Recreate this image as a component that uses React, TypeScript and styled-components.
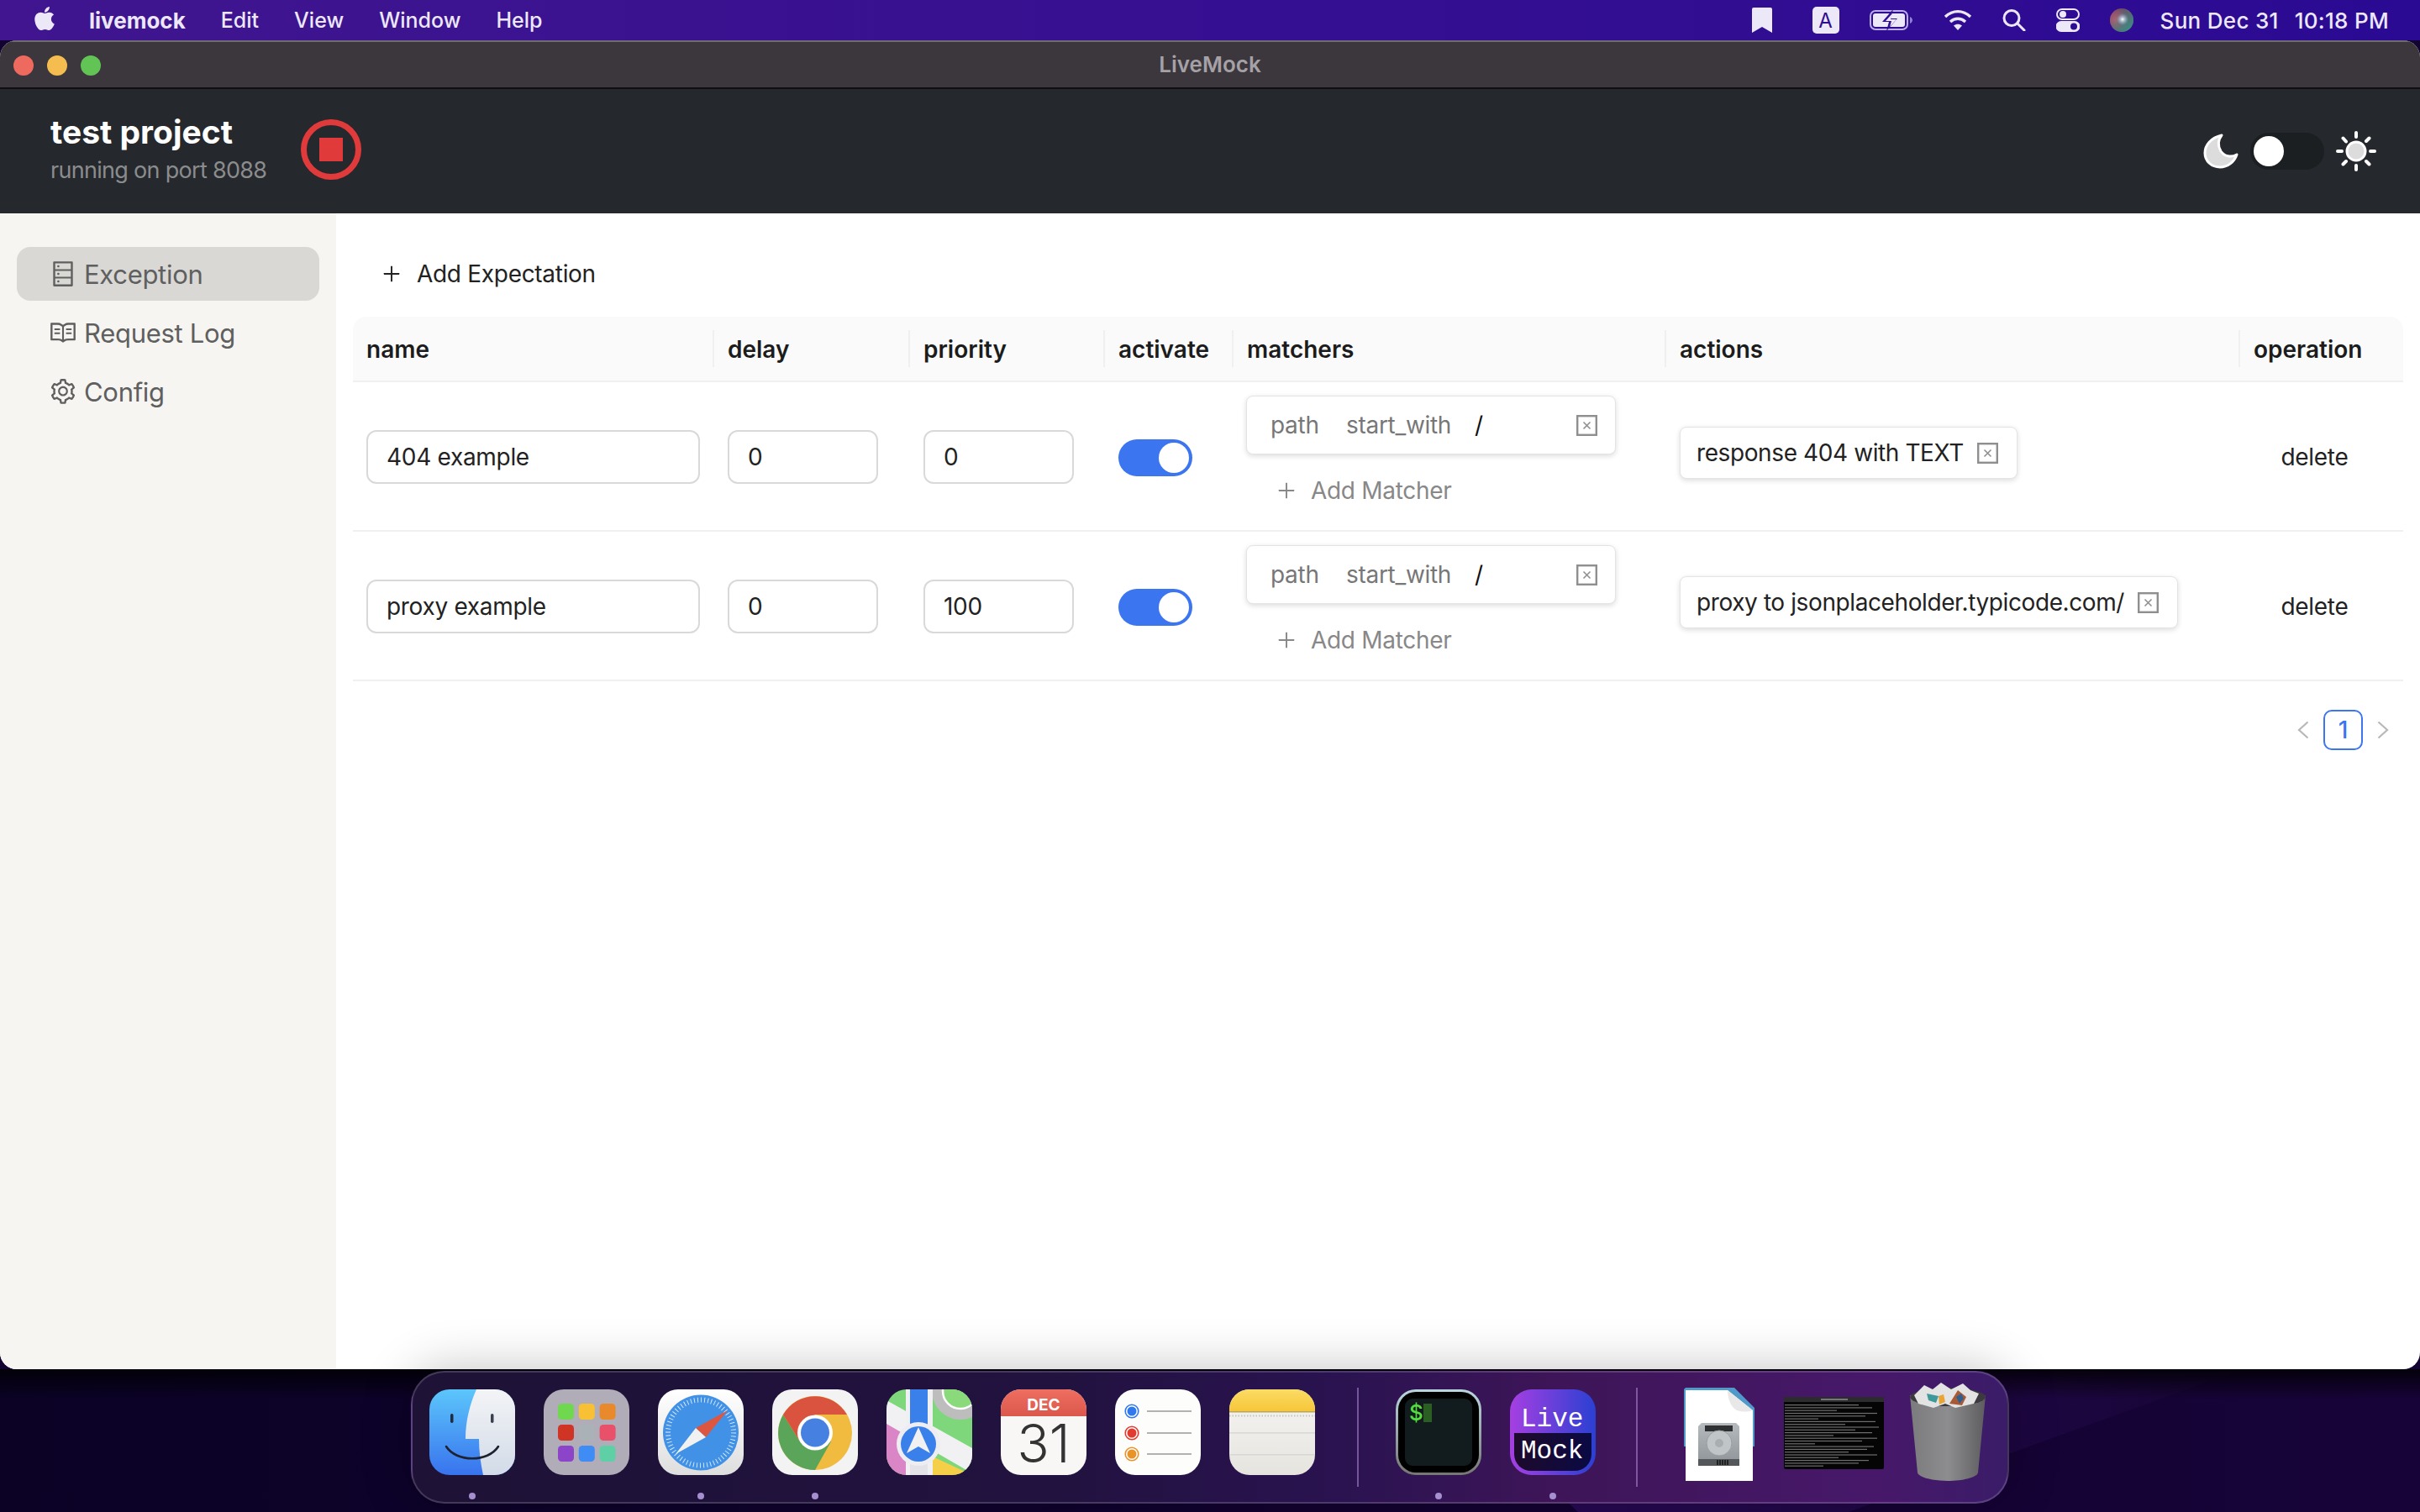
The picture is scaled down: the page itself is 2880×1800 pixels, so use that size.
import React, { FC } from 'react'
import styled, { createGlobalStyle } from 'styled-components'
import { AiOutlineDatabase, AiOutlinePlus, AiOutlineRead, AiOutlineSetting } from 'react-icons/ai'
import { FaApple } from 'react-icons/fa'

const UI_FONT = `Inter, "Noto Sans", "Liberation Sans", sans-serif`

const GlobalStyle = createGlobalStyle`
    html, body {
        margin: 0;
        padding: 0;
        background: #120330;
        font-family: ${UI_FONT};
    }
    * {
        box-sizing: border-box;
    }
`

const expectations = [
    { name: '404 example', delay: '0', priority: '0', action: 'response 404 with TEXT' },
    { name: 'proxy example', delay: '0', priority: '100', action: 'proxy to jsonplaceholder.typicode.com/' }
]

const logLines = [88, 104, 62, 110, 96, 40, 108, 72, 112, 84, 104, 58, 110, 92, 36, 106, 98, 76, 110, 64, 100, 88, 46]

/* ---------- menu bar icons ---------- */

const BookmarkIcon = () => (
    <svg width="24" height="30" viewBox="0 0 24 30"><path d="M2 0h20a2 2 0 0 1 2 2v28l-12-7-12 7V2a2 2 0 0 1 2-2z" fill="#ece8f8" /></svg>
)

const BatteryIcon = () => (
    <svg width="52" height="26" viewBox="0 0 52 26">
        <rect x="1" y="2" width="44" height="22" rx="6" fill="none" stroke="#b9aee6" strokeWidth="2" />
        <rect x="4" y="5" width="38" height="16" rx="3" fill="#ece8f8" />
        <path d="M48 9c2 1 3 2.500 3 4s-1 3-3 4z" fill="#8f83cf" />
        <path d="M28 0L15 15h8l-3 11 13-15h-8z" fill="#2f0c92" />
        <path d="M27 5l-8 9h7l-2 7 8-9h-7z" fill="#ece8f8" />
    </svg>
)

const WifiIcon = () => (
    <svg width="34" height="26" viewBox="0 0 34 26" fill="none" stroke="#ece8f8" strokeWidth="3.400">
        <path d="M2 9c9-8.500 21-8.500 30 0" />
        <path d="M8 15c5.500-5 12.500-5 18 0" />
        <path d="M17 25l-5-5.500c3-2.500 7-2.500 10 0z" fill="#ece8f8" stroke="none" />
    </svg>
)

const SearchIcon = () => (
    <svg width="28" height="26" viewBox="0 0 28 26" fill="none" stroke="#ece8f8" strokeWidth="3">
        <circle cx="11" cy="10.500" r="9" />
        <path d="M18 17l8 8" strokeLinecap="round" />
    </svg>
)

const ControlIcon = () => (
    <svg width="28" height="28" viewBox="0 0 28 28">
        <rect x="1" y="1" width="26" height="12" rx="6" fill="none" stroke="#ece8f8" strokeWidth="2" />
        <circle cx="8" cy="7" r="4" fill="#ece8f8" />
        <path d="M6 15h16a6 6 0 0 1 0 13H6a6 6 0 0 1 0-13z" fill="#ece8f8" />
        <circle cx="21" cy="21.500" r="4" fill="#2f0c92" />
    </svg>
)

const SiriIcon = () => (
    <svg width="28" height="28" viewBox="0 0 28 28">
        <defs>
            <radialGradient id="siriA" cx="25%" cy="50%" r="55%"><stop offset="0" stopColor="#e0506e" /><stop offset="1" stopColor="#7b3a62" /></radialGradient>
            <radialGradient id="siriB" cx="50%" cy="50%" r="30%"><stop offset="0" stopColor="#ffffff" /><stop offset="1" stopColor="#7ec0e8" stopOpacity="0" /></radialGradient>
            <linearGradient id="siriC" x1="0" y1="0" x2="1" y2="1"><stop offset="0" stopColor="#3a8a7a" stopOpacity="0" /><stop offset="1" stopColor="#2f9c8a" /></linearGradient>
        </defs>
        <circle cx="14" cy="14" r="14" fill="url(#siriA)" />
        <circle cx="14" cy="14" r="14" fill="url(#siriC)" />
        <circle cx="15" cy="13" r="12" fill="url(#siriB)" />
    </svg>
)

/* ---------- header icons ---------- */

const StopIcon = () => (
    <svg width="72" height="72" viewBox="0 0 72 72">
        <circle cx="36" cy="36" r="32.500" fill="none" stroke="#e13a3a" strokeWidth="7" />
        <rect x="22" y="22" width="28" height="28" fill="#e13a3a" />
    </svg>
)

const MoonIcon = () => (
    <svg width="42" height="42" viewBox="0 0 42 42">
        <path d="M22 2C9 5 2 14 2 23c0 10 8 17 18 17 9 0 17-6 20-15-7 4-15 2-19-4-4-7-3-14 1-19z" fill="#dcdcdc" stroke="#fff" strokeWidth="3" strokeLinejoin="round" />
    </svg>
)

const SunIcon = () => (
    <svg width="48" height="48" viewBox="0 0 48 48">
        <circle cx="24" cy="24" r="11" fill="#dcdcdc" stroke="#fff" strokeWidth="3" />
        <g stroke="#fff" strokeWidth="4" strokeLinecap="round">
            <path d="M24 2v5M24 41v5M2 24h5M41 24h5M8.500 8.500l3.500 4M36 36l3.500 3.500M8.500 39.500l3.500-3.500M36 12l3.500-3.500" />
        </g>
    </svg>
)

const RemoveIcon = () => (
    <svg width="25" height="25" viewBox="0 0 25 25" fill="none" stroke="#8f8f8f">
        <rect x="1.200" y="1.200" width="22.600" height="22.600" strokeWidth="2.400" />
        <path d="M8.500 8.500l8 8M16.500 8.500l-8 8" strokeWidth="1.600" />
    </svg>
)

const Chevron: FC<{ flip?: boolean }> = ({ flip }) => (
    <svg width="14" height="22" viewBox="0 0 14 22" fill="none" stroke="#b8b8b8" strokeWidth="2.200" style={flip ? { transform: 'scaleX(-1)' } : undefined}>
        <path d="M12.500 1.500L2 11l10.500 9.500" />
    </svg>
)

/* ---------- dock icons ---------- */

const FinderIcon = () => (
    <svg width="102" height="102" viewBox="0 0 102 102">
        <defs>
            <linearGradient id="finderL" x1="0" y1="0" x2="0" y2="1"><stop offset="0" stopColor="#5cc6fb" /><stop offset="1" stopColor="#3873ee" /></linearGradient>
            <linearGradient id="finderR" x1="0" y1="0" x2="0" y2="1"><stop offset="0" stopColor="#f3f4f6" /><stop offset="1" stopColor="#d2dbe8" /></linearGradient>
            <clipPath id="finderClip"><rect width="102" height="102" rx="24" /></clipPath>
        </defs>
        <g clipPath="url(#finderClip)">
            <rect width="102" height="102" fill="url(#finderL)" />
            <path d="M56 0h46v102H64c-3-14-5-28-5-43H43c0-21 5-41 13-59z" fill="url(#finderR)" />
        </g>
        <rect x="25" y="29" width="3.500" height="11" rx="1.700" fill="#1d2b44" />
        <rect x="73" y="29" width="3.500" height="11" rx="1.700" fill="#39414f" />
        <path d="M20 68c12 19 50 19 62 0" fill="none" stroke="#1e2230" strokeWidth="2.600" strokeLinecap="round" />
    </svg>
)

const launchpadTiles = [
    ['#6fd84e', '#f7c035', '#e88a2c'],
    ['#cf3424', '#aab2b8', '#e9506a'],
    ['#8c45c8', '#3f8cf5', '#5fcfa5']
]

const LaunchpadIcon = () => (
    <svg width="102" height="102" viewBox="0 0 102 102">
        <rect width="102" height="102" rx="24" fill="#b1adb8" />
        {launchpadTiles.map((row, r) => row.map((color, c) => (
            <rect key={`${r}-${c}`} x={17 + c * 24.800} y={17 + r * 25} width="19" height="19" rx="4.500" fill={color} />
        )))}
    </svg>
)

const SafariIcon = () => (
    <svg width="102" height="102" viewBox="0 0 102 102">
        <defs>
            <linearGradient id="safariBg" x1="0" y1="0" x2="0" y2="1"><stop offset="0" stopColor="#fff" /><stop offset="1" stopColor="#dedede" /></linearGradient>
        </defs>
        <rect width="102" height="102" rx="24" fill="url(#safariBg)" />
        <circle cx="51" cy="51.500" r="45" fill="#4192e6" />
        <circle cx="51" cy="51.500" r="39" fill="none" stroke="#fff" strokeOpacity="0.850" strokeWidth="6" strokeDasharray="0.900 3.180" />
        <polygon points="83,25 45,46 57,57" fill="#dc5640" />
        <polygon points="21,77 45,46 57,57" fill="#f1f1f1" />
    </svg>
)

const ChromeIcon = () => (
    <svg width="102" height="102" viewBox="0 0 102 102">
        <rect width="102" height="102" rx="24" fill="#f3f3f3" />
        <circle cx="51" cy="52" r="44" fill="#f0bb3e" />
        <path d="M13 30A44 44 0 0 0 51 96L70 62H33z" fill="#5aa55a" />
        <path d="M89 30A44 44 0 0 0 13 30L33 62 51 30z" fill="#d9533f" />
        <circle cx="51" cy="51.500" r="21" fill="#fff" />
        <circle cx="51" cy="51.500" r="17" fill="#4680e0" />
    </svg>
)

const MapsIcon = () => (
    <svg width="102" height="102" viewBox="0 0 102 102">
        <defs><clipPath id="mapsClip"><rect width="102" height="102" rx="24" /></clipPath></defs>
        <g clipPath="url(#mapsClip)">
            <rect width="102" height="102" fill="#7ed77b" />
            <circle cx="88" cy="2" r="34" fill="#bdbdbd" />
            <circle cx="88" cy="2" r="21" fill="#8ada7c" stroke="#fff" strokeWidth="2.500" />
            <path d="M0 41l23 0V102H0z" fill="#d985c6" />
            <path d="M55 80l47 22H55z" fill="#f6cf48" />
            <path d="M0 13l102 57v30L0 41z" fill="#f1f1f3" />
            <rect x="23" width="32" height="102" fill="#f0f0f2" />
            <rect x="28" width="21" height="102" fill="#3a80ea" />
            <rect x="28" y="60" width="21" height="42" fill="#e4e4e8" />
        </g>
        <circle cx="38" cy="65" r="26" fill="#eeeef2" />
        <circle cx="38" cy="65" r="21" fill="#3a80ea" />
        <path d="M38 45l14 31-14-8-14 8z" fill="#f1f1f1" />
    </svg>
)

const CalendarIcon = () => (
    <svg width="102" height="102" viewBox="0 0 102 102">
        <defs>
            <clipPath id="calClip"><rect width="102" height="102" rx="24" /></clipPath>
            <linearGradient id="calTop" x1="0" y1="0" x2="0" y2="1"><stop offset="0" stopColor="#ee6e60" /><stop offset="1" stopColor="#db574c" /></linearGradient>
        </defs>
        <g clipPath="url(#calClip)">
            <rect width="102" height="102" fill="#f8f7f6" />
            <rect width="102" height="32" fill="url(#calTop)" />
        </g>
        <text x="51" y="25" textAnchor="middle" fontFamily={UI_FONT} fontSize="19" fontWeight="700" fill="#fff">DEC</text>
        <text x="51" y="87" textAnchor="middle" fontFamily={UI_FONT} fontSize="63" fontWeight="300" fill="#333">31</text>
    </svg>
)

const reminderDots = [
    { y: 26, color: '#2f78ee' },
    { y: 52, color: '#e23b30' },
    { y: 77, color: '#e8932a' }
]

const RemindersIcon = () => (
    <svg width="102" height="102" viewBox="0 0 102 102">
        <rect width="102" height="102" rx="24" fill="#fdfdfc" />
        {reminderDots.map(dot => (
            <g key={dot.y}>
                <circle cx="20" cy={dot.y} r="7.800" fill="#fff" stroke={dot.color} strokeWidth="1.600" />
                <circle cx="20" cy={dot.y} r="5.500" fill={dot.color} />
                <rect x="38" y={dot.y - 1} width="53" height="2" fill="#b2b2b2" />
            </g>
        ))}
    </svg>
)

const NotesIcon = () => (
    <svg width="102" height="102" viewBox="0 0 102 102">
        <defs>
            <clipPath id="notesClip"><rect width="102" height="102" rx="24" /></clipPath>
            <linearGradient id="notesTop" x1="0" y1="0" x2="0" y2="1"><stop offset="0" stopColor="#fbdc64" /><stop offset="1" stopColor="#f6c63a" /></linearGradient>
            <linearGradient id="notesBody" x1="0" y1="0" x2="0" y2="1"><stop offset="0" stopColor="#f6f5f2" /><stop offset="1" stopColor="#e5e4df" /></linearGradient>
        </defs>
        <g clipPath="url(#notesClip)">
            <rect width="102" height="102" fill="url(#notesBody)" />
            <rect width="102" height="26" fill="url(#notesTop)" />
            <rect y="26" width="102" height="1.500" fill="#b9a65a" />
            <path d="M0 31.500h102" stroke="#c4c4c0" strokeWidth="2" strokeDasharray="1.500 2" />
            <rect y="51" width="102" height="1.600" fill="#d8d8d4" />
            <rect y="77" width="102" height="1.600" fill="#d8d8d4" />
        </g>
    </svg>
)

const TerminalIcon = () => (
    <svg width="102" height="102" viewBox="0 0 102 102">
        <defs>
            <linearGradient id="termEdge" x1="0" y1="0" x2="0" y2="1"><stop offset="0" stopColor="#b9d6de" /><stop offset="1" stopColor="#767672" /></linearGradient>
        </defs>
        <rect width="102" height="102" rx="24" fill="url(#termEdge)" />
        <rect x="3" y="3" width="96" height="96" rx="21" fill="#000" />
        <rect x="11" y="11" width="80" height="80" rx="9" fill="#121b1d" />
        <text x="16" y="37" fontFamily={UI_FONT} fontSize="26" fontWeight="500" fill="#55dd40">$</text>
        <rect x="33" y="17" width="10" height="22" fill="#2a5e22" />
    </svg>
)

const LiveMockIcon = () => (
    <svg width="102" height="102" viewBox="0 0 102 102">
        <defs>
            <linearGradient id="lmBg" x1="0" y1="0" x2="1" y2="0"><stop offset="0" stopColor="#a63fe2" /><stop offset="1" stopColor="#2a40d2" /></linearGradient>
            <linearGradient id="lmDark" x1="0" y1="0" x2="1" y2="0"><stop offset="0" stopColor="#1e0a2c" /><stop offset="1" stopColor="#0a0a44" /></linearGradient>
        </defs>
        <rect width="102" height="102" rx="26" fill="url(#lmBg)" />
        <path d="M5 52h92v25a20 20 0 0 1-20 20H25A20 20 0 0 1 5 77z" fill="url(#lmDark)" />
        <text x="13" y="44" fontFamily="'Liberation Mono', monospace" fontSize="31" fill="#fff">Live</text>
        <text x="13" y="82" fontFamily="'Liberation Mono', monospace" fontSize="31" fill="#fff">Mock</text>
    </svg>
)

const DiskFileIcon = () => (
    <svg width="84" height="111" viewBox="0 0 84 111">
        <defs>
            <linearGradient id="diskBody" x1="0" y1="0" x2="0" y2="1"><stop offset="0" stopColor="#b4babd" /><stop offset="1" stopColor="#8d9396" /></linearGradient>
        </defs>
        <path d="M2 0h58l24 24v46H0V2z" fill="#4f9ac8" />
        <path d="M2 3h50l30 24v84H2z" fill="#fff" />
        <path d="M52 3c0 12 5 21 11 24 6 2 12 2 19 0z" fill="#e8e8e8" />
        <path d="M17 46l4-4h41l4 4v47H17z" fill="url(#diskBody)" />
        <rect x="25" y="45" width="33" height="7" fill="#2e3032" />
        <circle cx="42" cy="66" r="15" fill="#c0c5c8" stroke="#9a9fa2" />
        <circle cx="42" cy="66" r="5" fill="#a9aeb1" />
        <rect x="17" y="85" width="49" height="8" fill="#55585a" />
        <path d="M40 86v6M43 86v6M46 86v6M49 86v6M52 86v6" stroke="#111" strokeWidth="1.500" />
    </svg>
)

const LogWindowIcon = () => (
    <svg width="119" height="86" viewBox="0 0 119 86">
        <rect width="119" height="86" rx="2" fill="#050505" />
        <rect width="119" height="6" fill="#2c2c2e" />
        <rect x="44" y="2" width="32" height="2" fill="#777" />
        {logLines.map((width, i) => (
            <rect key={i} x="1" y={9 + i * 3.300} width={width} height="1.200" fill="#6e6e6e" />
        ))}
    </svg>
)

const TrashIcon = () => (
    <svg width="92" height="118" viewBox="0 0 92 118">
        <defs>
            <linearGradient id="binBody" x1="0" y1="0" x2="1" y2="0"><stop offset="0" stopColor="#7b7b7d" /><stop offset="0.500" stopColor="#8d8d8f" /><stop offset="1" stopColor="#5d5d5f" /></linearGradient>
        </defs>
        <path d="M1 16h90l-9 92c-1 6-19 10-36 10s-35-4-36-10z" fill="url(#binBody)" />
        <ellipse cx="46" cy="18" rx="45" ry="11" fill="#3c3a3e" />
        <path d="M6 16L18 4l10 5 10-8 12 8 14-7 9 8 10 4-6 12-22 5-12-5-14 5-18-5z" fill="#e3e3e3" />
        <path d="M21 14l14 3-3 8-9-3z" fill="#3e9a9a" />
        <path d="M35 17l6-2 2 9-7 3z" fill="#e8a536" />
        <path d="M48 26l10-16 10 8-5 10z" fill="#a85a38" />
        <path d="M56 18l6-4 3 6-5 6z" fill="#2f5f8f" />
    </svg>
)

/* ---------- page ---------- */

const MatcherCell: FC = () => (
    <Cell $column>
        <MatcherCard>
            <MatcherKey>path</MatcherKey>
            <MatcherOp>start_with</MatcherOp>
            <MatcherValue>/</MatcherValue>
            <RemoveSlot><RemoveIcon /></RemoveSlot>
        </MatcherCard>
        <AddMatcher><AiOutlinePlus size={26} />Add Matcher</AddMatcher>
    </Cell>
)

const App: FC = () => (
    <Desktop>
        <GlobalStyle />
        <MenuBar>
            <MenuLeft>
                <AppleSlot><FaApple size={32} color="#ece8f8" /></AppleSlot>
                <MenuApp>livemock</MenuApp>
                <MenuItem>Edit</MenuItem>
                <MenuItem>View</MenuItem>
                <MenuItem>Window</MenuItem>
                <MenuItem>Help</MenuItem>
            </MenuLeft>
            <MenuRight>
                <BookmarkSlot><BookmarkIcon /></BookmarkSlot>
                <InputBadge>A</InputBadge>
                <BatteryIcon />
                <WifiIcon />
                <SearchIcon />
                <ControlIcon />
                <SiriIcon />
                <Clock><span>Sun Dec 31</span><span>10:18 PM</span></Clock>
            </MenuRight>
        </MenuBar>

        <AppWindow>
            <TitleBar>
                <Lights>
                    <Light $color="#ee6a5f" />
                    <Light $color="#f5bd4f" />
                    <Light $color="#61c454" />
                </Lights>
                LiveMock
            </TitleBar>
            <Header>
                <HeaderLeft>
                    <ProjectInfo>
                        <ProjectName>test project</ProjectName>
                        <ProjectPort>running on port 8088</ProjectPort>
                    </ProjectInfo>
                    <StopIcon />
                </HeaderLeft>
                <ThemeSwitch>
                    <MoonIcon />
                    <ThemeTrack><ThemeKnob /></ThemeTrack>
                    <SunIcon />
                </ThemeSwitch>
            </Header>
            <Body>
                <Sidebar>
                    <NavItem $active><AiOutlineDatabase size={34} />Exception</NavItem>
                    <NavItem><AiOutlineRead size={34} />Request Log</NavItem>
                    <NavItem><AiOutlineSetting size={34} />Config</NavItem>
                </Sidebar>
                <Main>
                    <AddButton><AiOutlinePlus size={26} />Add Expectation</AddButton>
                    <TableHead>
                        <HeadCell>name</HeadCell>
                        <HeadCell>delay</HeadCell>
                        <HeadCell>priority</HeadCell>
                        <HeadCell>activate</HeadCell>
                        <HeadCell>matchers</HeadCell>
                        <HeadCell>actions</HeadCell>
                        <HeadCell $last>operation</HeadCell>
                    </TableHead>
                    {expectations.map(item => (
                        <TableRow key={item.name}>
                            <Cell><TextInput $width={397} readOnly value={item.name} /></Cell>
                            <Cell><TextInput $width={179} readOnly value={item.delay} /></Cell>
                            <Cell><TextInput $width={179} readOnly value={item.priority} /></Cell>
                            <Cell><Switch><SwitchKnob /></Switch></Cell>
                            <MatcherCell />
                            <Cell>
                                <ActionCard>
                                    {item.action}
                                    <RemoveIcon />
                                </ActionCard>
                            </Cell>
                            <DeleteCell>delete</DeleteCell>
                        </TableRow>
                    ))}
                    <Pagination>
                        <Chevron />
                        <PageButton>1</PageButton>
                        <Chevron flip />
                    </Pagination>
                </Main>
            </Body>
        </AppWindow>

        <DockArea>
            <Dock>
                <DockSlot><FinderIcon /><DockDot $on /></DockSlot>
                <DockSlot><LaunchpadIcon /><DockDot /></DockSlot>
                <DockSlot><SafariIcon /><DockDot $on /></DockSlot>
                <DockSlot><ChromeIcon /><DockDot $on /></DockSlot>
                <DockSlot><MapsIcon /><DockDot /></DockSlot>
                <DockSlot><CalendarIcon /><DockDot /></DockSlot>
                <DockSlot><RemindersIcon /><DockDot /></DockSlot>
                <DockSlot><NotesIcon /><DockDot /></DockSlot>
                <DockDivider $before={16} $after={10} />
                <DockSlot><TerminalIcon /><DockDot $on /></DockSlot>
                <DockSlot><LiveMockIcon /><DockDot $on /></DockSlot>
                <DockDivider $before={14} $after={12} />
                <FileSlot $top={-2}><DiskFileIcon /></FileSlot>
                <FileSlot $top={9}><LogWindowIcon /></FileSlot>
                <FileSlot $top={-9}><TrashIcon /></FileSlot>
            </Dock>
        </DockArea>
    </Desktop>
)

export default App

const Desktop = styled.div`
    width: 2880px;
    height: 1800px;
    display: flex;
    flex-direction: column;
    overflow: hidden;
    background: #120330;
`

const MenuBar = styled.div`
    height: 48px;
    flex-shrink: 0;
    display: flex;
    align-items: center;
    justify-content: space-between;
    padding: 0 37px 0 40px;
    background: linear-gradient(90deg, #40158f, #2b0a93);
    color: #ece8f8;
    font-size: 25px;
`

const MenuLeft = styled.div`
    display: flex;
    align-items: center;
    gap: 42px;
`

const AppleSlot = styled.div`
    width: 26px;
    margin-right: -2px;
    display: flex;
    justify-content: center;
    margin-top: -4px;
`

const MenuApp = styled.span`
    font-size: 26px;
    font-weight: 700;
`

const MenuItem = styled.span`
    font-weight: 500;
`

const MenuRight = styled.div`
    display: flex;
    align-items: center;
    gap: 36px;
`

const BookmarkSlot = styled.div`
    display: flex;
    margin-right: 12px;
`

const InputBadge = styled.div`
    width: 32px;
    height: 32px;
    border-radius: 5px;
    background: #ece8f8;
    color: #2f0c92;
    font-size: 24px;
    display: flex;
    align-items: center;
    justify-content: center;
`

const Clock = styled.div`
    display: flex;
    gap: 19px;
    margin-left: -4px;
    font-size: 26px;
    font-weight: 500;
    letter-spacing: 0.3px;
`

const AppWindow = styled.div`
    height: 1582px;
    flex-shrink: 0;
    display: flex;
    flex-direction: column;
    border-radius: 20px;
    overflow: hidden;
    background: #fff;
`

const TitleBar = styled.div`
    position: relative;
    height: 58px;
    flex-shrink: 0;
    display: flex;
    align-items: center;
    justify-content: center;
    background: #3b373d;
    box-shadow: inset 0 2px 0 #6f6b70;
    border-bottom: 2px solid #0e0e10;
    color: #a5a1a6;
    font-size: 26px;
    font-weight: 600;
`

const Lights = styled.div`
    position: absolute;
    left: 16px;
    top: 18px;
    display: flex;
    gap: 16px;
`

const Light = styled.span<{ $color: string }>`
    width: 24px;
    height: 24px;
    border-radius: 50%;
    background: ${props => props.$color};
`

const Header = styled.div`
    height: 148px;
    flex-shrink: 0;
    display: flex;
    align-items: center;
    justify-content: space-between;
    padding: 0 52px 0 60px;
    background: #25282c;
`

const HeaderLeft = styled.div`
    display: flex;
    align-items: center;
    gap: 41px;
    padding-bottom: 4px;
`

const ProjectInfo = styled.div`
    display: flex;
    flex-direction: column;
`

const ProjectName = styled.div`
    color: #fff;
    font-size: 39px;
    font-weight: 700;
    line-height: 50px;
`

const ProjectPort = styled.div`
    color: #8b8c8e;
    font-size: 27px;
    letter-spacing: -0.7px;
    line-height: 42px;
`

const ThemeSwitch = styled.div`
    display: flex;
    align-items: center;
    gap: 14px;
`

const ThemeTrack = styled.div`
    width: 88px;
    height: 44px;
    border-radius: 22px;
    padding: 4px;
    background: #1c1f22;
`

const ThemeKnob = styled.div`
    width: 36px;
    height: 36px;
    border-radius: 50%;
    background: #fff;
`

const Body = styled.div`
    flex: 1;
    display: flex;
    min-height: 0;
`

const Sidebar = styled.div`
    width: 400px;
    flex-shrink: 0;
    display: flex;
    flex-direction: column;
    gap: 6px;
    padding: 40px 20px;
    background: #f6f5f1;
`

const NavItem = styled.div<{ $active?: boolean }>`
    height: 64px;
    display: flex;
    align-items: center;
    gap: 8px;
    padding-left: 38px;
    border-radius: 16px;
    background: ${props => props.$active ? '#d9d8d5' : 'transparent'};
    color: #5f5f5f;
    font-size: 31px;
    letter-spacing: -0.3px;
`

const Main = styled.div`
    flex: 1;
    padding: 39px 20px 0;
    min-width: 0;
`

const AddButton = styled.div`
    height: 64px;
    margin-bottom: 20px;
    display: flex;
    align-items: center;
    gap: 17px;
    padding: 2px 0 0 33px;
    color: #222;
    font-size: 28px;
    letter-spacing: -0.3px;
`

const COLUMNS = '430px 233px 232px 153px 515px 683px 194px'

const TableHead = styled.div`
    display: grid;
    grid-template-columns: ${COLUMNS};
    height: 78px;
    background: #fafafa;
    border-bottom: 2px solid #f0f0f0;
    border-radius: 16px 16px 0 0;
`

const HeadCell = styled.div<{ $last?: boolean }>`
    position: relative;
    display: flex;
    align-items: center;
    padding: 2px 0 0 16px;
    color: #1c1c1c;
    font-size: 28px;
    font-weight: 600;

    &::after {
        content: '';
        display: ${props => props.$last ? 'none' : 'block'};
        position: absolute;
        right: 0;
        top: 16px;
        bottom: 16px;
        width: 2px;
        background: #f0f0f0;
    }
`

const TableRow = styled.div`
    display: grid;
    grid-template-columns: ${COLUMNS};
    height: 178px;
    border-bottom: 2px solid #f0f0f0;
`

const Cell = styled.div<{ $column?: boolean }>`
    display: flex;
    flex-direction: ${props => props.$column ? 'column' : 'row'};
    align-items: ${props => props.$column ? 'flex-start' : 'center'};
    justify-content: ${props => props.$column ? 'center' : 'flex-start'};
    padding: 0 16px;
`

const TextInput = styled.input<{ $width: number }>`
    width: ${props => props.$width}px;
    height: 64px;
    margin-top: 2px;
    padding: 0 22px;
    border: 2px solid #d9d9d9;
    border-radius: 12px;
    outline: none;
    background: #fff;
    color: #222;
    font-family: ${UI_FONT};
    font-size: 28px;
    letter-spacing: -0.3px;
    font-weight: 400;
`

const Switch = styled.div`
    width: 88px;
    height: 44px;
    margin-top: 4px;
    display: flex;
    justify-content: flex-end;
    padding: 4px;
    border-radius: 22px;
    background: #3b76f0;
`

const SwitchKnob = styled.div`
    width: 36px;
    height: 36px;
    border-radius: 50%;
    background: #fff;
`

const MatcherCard = styled.div`
    width: 440px;
    height: 70px;
    margin-left: -1px;
    display: flex;
    align-items: center;
    padding: 0 21px 0 28px;
    border-radius: 8px;
    background: #fff;
    border: 1px solid #e4e4e4;
    box-shadow: 0 2px 6px rgba(0, 0, 0, 0.14);
    font-size: 28px;
    letter-spacing: -0.3px;
`

const MatcherKey = styled.span`
    width: 90px;
    color: #777;
`

const MatcherOp = styled.span`
    width: 153px;
    color: #777;
`

const MatcherValue = styled.span`
    flex: 1;
    color: #111;
`

const RemoveSlot = styled.span`
    display: flex;
`

const AddMatcher = styled.div`
    height: 64px;
    margin-top: 10px;
    display: flex;
    align-items: center;
    gap: 16px;
    padding: 2px 0 0 34px;
    color: #888;
    font-size: 28px;
    letter-spacing: -0.3px;
`

const ActionCard = styled.div`
    height: 62px;
    margin-bottom: 8px;
    display: flex;
    align-items: center;
    gap: 16px;
    padding: 0 22px 0 19px;
    border-radius: 8px;
    background: #fff;
    border: 1px solid #e4e4e4;
    box-shadow: 0 2px 6px rgba(0, 0, 0, 0.14);
    color: #222;
    font-size: 28px;
    letter-spacing: -0.4px;
    white-space: nowrap;
`

const DeleteCell = styled.div`
    display: flex;
    align-items: center;
    justify-content: center;
    padding: 2px 17px 0 0;
    color: #222;
    font-size: 28px;
    letter-spacing: -0.3px;
`

const Pagination = styled.div`
    margin-top: 34px;
    display: flex;
    align-items: center;
    justify-content: flex-end;
    gap: 17px;
    padding-right: 17px;
`

const PageButton = styled.div`
    width: 47px;
    height: 48px;
    display: flex;
    align-items: center;
    justify-content: center;
    border: 2px solid #3b76f0;
    border-radius: 10px;
    color: #3b76f0;
    font-size: 28px;
    font-weight: 500;
`

const DockArea = styled.div`
    position: relative;
    flex: 1;
    display: flex;
    justify-content: center;
    padding-top: 2px;
    background: linear-gradient(90deg, #0b0226, #170338);

    &::before {
        content: '';
        position: absolute;
        inset: 0;
        background: linear-gradient(90deg, #40106a, #2c0a5e 55%, #14042f);
        clip-path: polygon(1700px 0, 2660px 3px, 2200px 170px, 1878px 170px);
    }

    &::after {
        content: '';
        position: absolute;
        inset: 0 0 auto;
        height: 36px;
        background: linear-gradient(180deg, rgba(0, 0, 0, 0.8), rgba(0, 0, 0, 0));
    }
`

const Dock = styled.div`
    position: relative;
    z-index: 1;
    width: 1902px;
    height: 158px;
    display: flex;
    gap: 34px;
    padding: 20px 0 0 20px;
    border: 2px solid rgba(255, 255, 255, 0.17);
    border-radius: 40px;
    background: linear-gradient(90deg, #1e1236, #21123f 40%, #2a1350 58%, #3e1558 72%, #47186a 92%, #3a1c68);
    box-shadow: 0 -2px 60px rgba(0, 0, 0, 0.24);
`

const DockSlot = styled.div`
    width: 102px;
    flex-shrink: 0;
    display: flex;
    flex-direction: column;
    align-items: center;
    gap: 21px;
`

const DockDot = styled.span<{ $on?: boolean }>`
    width: 8px;
    height: 8px;
    border-radius: 50%;
    background: ${props => props.$on ? '#a58fd0' : 'transparent'};
`

const DockDivider = styled.div<{ $before: number; $after: number }>`
    width: 2px;
    height: 118px;
    flex-shrink: 0;
    margin: -2px ${props => props.$after}px 0 ${props => props.$before}px;
    background: rgba(190, 150, 230, 0.5);
`

const FileSlot = styled.div<{ $top: number }>`
    width: 102px;
    flex-shrink: 0;
    display: flex;
    justify-content: center;
    align-items: flex-start;
    margin-top: ${props => props.$top}px;

    svg {
        flex-shrink: 0;
    }
`
